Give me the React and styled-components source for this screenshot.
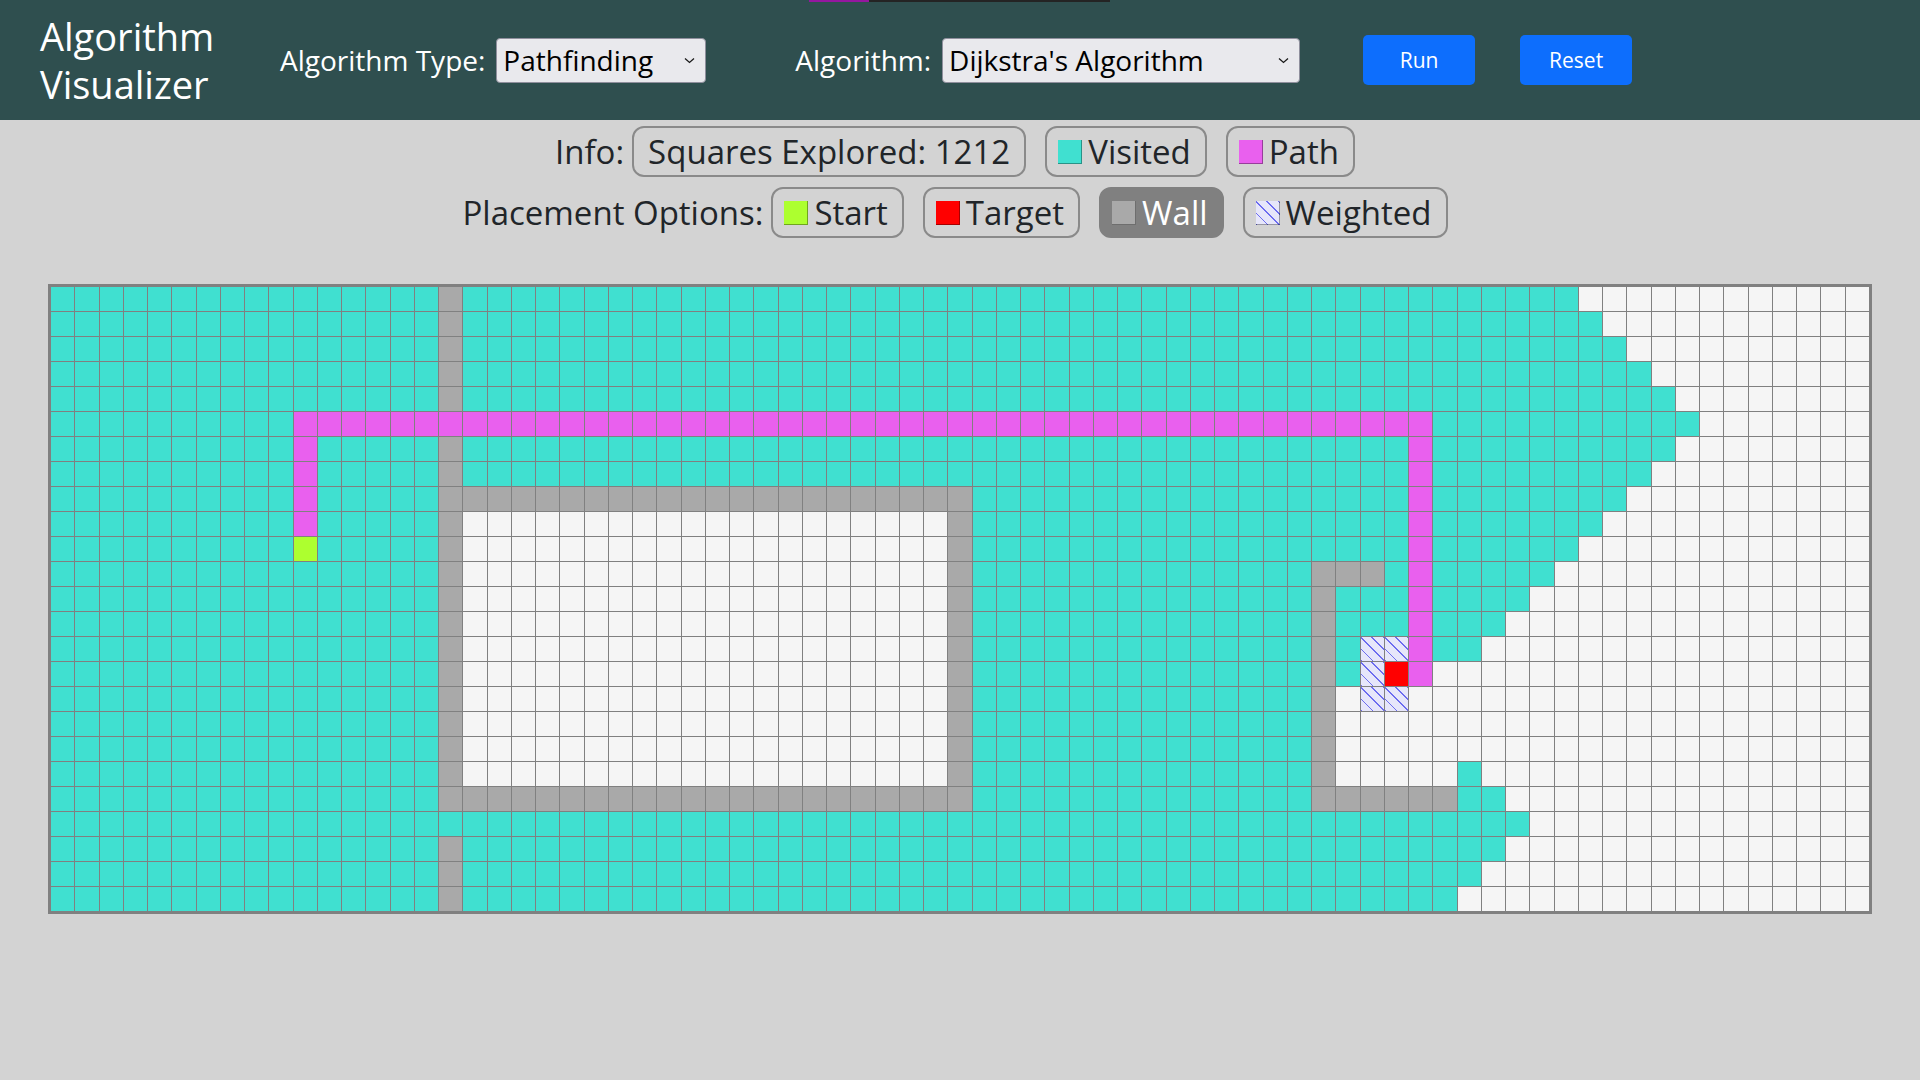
import React, { useMemo } from "react";
import styled, { createGlobalStyle } from "styled-components";

const ROWS = 25;
const COLS = 75;
const START = [10, 10];
const TARGET = [15, 55];
const WEIGHT = 15;

const key = (r, c) => r * COLS + c;

const CELL_BG = {
  empty: "#f5f5f5",
  visited: "#40e0d0",
  path: "#e960ee",
  wall: "#a9a9a9",
  start: "#adff2f",
  target: "#ff0000",
  weighted:
    "repeating-linear-gradient(45deg, #6c6cf0 0 1px, #e6e6fa 1px 8px)",
};

function buildBoard() {
  const walls = new Set();
  const row = (r, c0, c1) => {
    for (let c = c0; c <= c1; c++) walls.add(key(r, c));
  };
  const col = (c, r0, r1) => {
    for (let r = r0; r <= r1; r++) walls.add(key(r, c));
  };

  // long divider, open at rows 5 and 21
  col(16, 0, 4);
  col(16, 6, 20);
  col(16, 22, 24);
  // closed room
  row(8, 16, 37);
  row(20, 16, 37);
  col(37, 8, 20);
  // hook next to the target
  row(11, 52, 54);
  col(52, 11, 20);
  row(20, 52, 57);

  const weights = new Set([
    key(14, 54),
    key(14, 55),
    key(15, 54),
    key(16, 54),
    key(16, 55),
  ]);

  const path = new Set();
  for (let r = 5; r <= 9; r++) path.add(key(r, 10));
  for (let c = 10; c <= 56; c++) path.add(key(5, c));
  for (let r = 5; r <= 15; r++) path.add(key(r, 56));

  return { walls, weights, path };
}

function dijkstra(walls, weights) {
  const n = ROWS * COLS;
  const dist = new Array(n).fill(Infinity);
  const done = new Array(n).fill(false);
  const visited = new Set();
  const target = key(...TARGET);
  dist[key(...START)] = 0;

  for (;;) {
    let best = -1;
    for (let i = 0; i < n; i++) {
      if (done[i] || dist[i] === Infinity) continue;
      if (best < 0 || dist[i] < dist[best]) best = i;
    }
    if (best < 0) break;
    done[best] = true;
    visited.add(best);
    if (best === target) break;

    const r = Math.floor(best / COLS);
    const c = best % COLS;
    for (const [dr, dc] of [[-1, 0], [1, 0], [0, -1], [0, 1]]) {
      const nr = r + dr;
      const nc = c + dc;
      if (nr < 0 || nr >= ROWS || nc < 0 || nc >= COLS) continue;
      const k = key(nr, nc);
      if (walls.has(k) || done[k]) continue;
      const d = dist[best] + (weights.has(k) ? WEIGHT : 1);
      if (d < dist[k]) dist[k] = d;
    }
  }
  return visited;
}

function cellKind(k, board, visited) {
  if (k === key(...START)) return "start";
  if (k === key(...TARGET)) return "target";
  if (board.path.has(k)) return "path";
  if (board.walls.has(k)) return "wall";
  if (board.weights.has(k)) return "weighted";
  if (visited.has(k)) return "visited";
  return "empty";
}

function Dropdown({ width, options }) {
  return (
    <SelectWrap $width={width}>
      <Select defaultValue={options[0]}>
        {options.map(o => (
          <option key={o}>{o}</option>
        ))}
      </Select>
      <Chevron width="11" height="7" viewBox="0 0 11 7">
        <path d="M1 1.5l4.5 4 4.5-4" fill="none" stroke="#1a1a1a" strokeWidth="1.3" />
      </Chevron>
    </SelectWrap>
  );
}

export default function App() {
  const board = useMemo(buildBoard, []);
  const visited = useMemo(() => dijkstra(board.walls, board.weights), [board]);

  const cells = [];
  for (let k = 0; k < ROWS * COLS; k++) {
    cells.push(<Cell key={k} $kind={cellKind(k, board, visited)} />);
  }

  return (
    <>
      <GlobalStyle />
      <Header>
        <Progress $pct={20} />
        <Title>Algorithm Visualizer</Title>
        <Field $after={89}>
          <FieldLabel>Algorithm Type:</FieldLabel>
          <Dropdown width={210} options={["Pathfinding", "Sorting"]} />
        </Field>
        <Field>
          <FieldLabel>Algorithm:</FieldLabel>
          <Dropdown
            width={358}
            options={["Dijkstra's Algorithm", "A* Search", "Breadth First Search", "Depth First Search"]}
          />
        </Field>
        <ActionButton $gap={63}>Run</ActionButton>
        <ActionButton $gap={45}>Reset</ActionButton>
      </Header>

      <Legend>
        <LegendRow>
          <RowLabel>Info:</RowLabel>
          <Pill>Squares Explored: 1212</Pill>
          <Pill $swatch>
            <Swatch $kind="visited" />
            Visited
          </Pill>
          <Pill $swatch>
            <Swatch $kind="path" />
            Path
          </Pill>
        </LegendRow>
        <LegendRow>
          <RowLabel>Placement Options:</RowLabel>
          <Pill $swatch>
            <Swatch $kind="start" />
            Start
          </Pill>
          <Pill $swatch>
            <Swatch $kind="target" />
            Target
          </Pill>
          <Pill $swatch $active>
            <Swatch $kind="wall" />
            Wall
          </Pill>
          <Pill $swatch>
            <Swatch $kind="weighted" />
            Weighted
          </Pill>
        </LegendRow>
      </Legend>

      <Board>{cells}</Board>
    </>
  );
}

const GlobalStyle = createGlobalStyle`
  html, body {
    margin: 0;
    background: #d3d3d3;
  }

  body {
    font-family: "Open Sans", "Noto Sans", sans-serif;
    color: #212529;
  }

  #root {
    min-height: 100vh;
  }
`;

const Header = styled.header`
  position: relative;
  display: flex;
  align-items: center;
  height: 120px;
  padding-left: 40px;
  background: #2f4f4f;
  color: #fff;
`;

const Progress = styled.div`
  position: absolute;
  top: 0;
  left: 809px;
  width: 301px;
  height: 2px;
  background: #242424;

  &::before {
    content: "";
    display: block;
    width: ${p => p.$pct}%;
    height: 100%;
    background: #94179f;
  }
`;

const Title = styled.h1`
  width: 240px;
  margin: 0;
  font-size: 38px;
  font-weight: 400;
  line-height: 48px;
`;

const Field = styled.div`
  display: flex;
  align-items: center;
  gap: 11px;
  margin-right: ${p => p.$after || 0}px;
  font-size: 28px;
`;

const FieldLabel = styled.span`
  white-space: nowrap;
`;

const SelectWrap = styled.div`
  position: relative;
  width: ${p => p.$width}px;
  height: 45px;
`;

const Select = styled.select`
  appearance: none;
  width: 100%;
  height: 100%;
  padding: 0 30px 0 6px;
  border: 1px solid #8f8f9d;
  border-radius: 4px;
  background: #e9e9ed;
  color: #000;
  font-family: inherit;
  font-size: 28px;
`;

const Chevron = styled.svg`
  position: absolute;
  top: 19px;
  right: 11px;
  pointer-events: none;
`;

const ActionButton = styled.button`
  width: 112px;
  height: 50px;
  margin-left: ${p => p.$gap}px;
  border: none;
  border-radius: 5px;
  background: #0d6efd;
  color: #fff;
  font-family: inherit;
  font-size: 21px;
`;

const Legend = styled.section`
  display: flex;
  flex-direction: column;
  align-items: center;
  gap: 10px;
  padding-top: 6px;
`;

const LegendRow = styled.div`
  display: flex;
  align-items: center;
  padding-right: 10px;
  font-size: 33px;
`;

const RowLabel = styled.span`
  margin-right: 8px;
`;

const Pill = styled.div`
  display: flex;
  align-items: center;
  box-sizing: border-box;
  height: 51px;
  padding: 0 14px 0 ${p => (p.$swatch ? 11 : 14)}px;
  border: 2px solid ${p => (p.$active ? "#808080" : "#8a8a8a")};
  border-radius: 12px;
  background: ${p => (p.$active ? "#808080" : "transparent")};
  color: ${p => (p.$active ? "#fff" : "#212529")};
  white-space: nowrap;

  & + & {
    margin-left: 19px;
  }
`;

const Swatch = styled.span`
  flex-shrink: 0;
  width: 24px;
  height: 24px;
  margin-right: 6px;
  background: ${p => CELL_BG[p.$kind]};
  box-shadow: inset -1px -1px 0 rgba(0, 0, 0, 0.35);
`;

const Board = styled.div`
  display: grid;
  grid-template-columns: repeat(${COLS}, minmax(0, 1fr));
  grid-auto-rows: 24px;
  gap: 1px;
  margin: 46px 48px 0;
  border: 3px solid #808080;
  background: #808080;
`;

const Cell = styled.div`
  background: ${p => CELL_BG[p.$kind]};
`;
